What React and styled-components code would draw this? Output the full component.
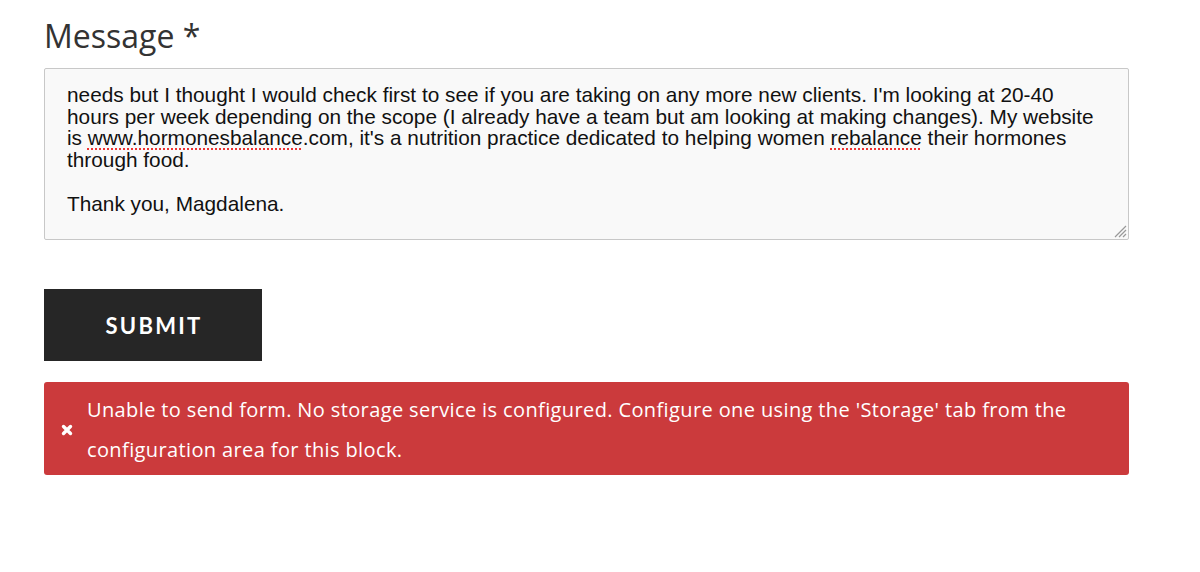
import React from 'react';
import styled, { createGlobalStyle } from 'styled-components';

const GlobalStyle = createGlobalStyle`
  html, body { margin: 0; padding: 0; background: #fff; }
  body { font-family: "Open Sans", Lato, sans-serif; }
`;

const Form = styled.div`
  padding: 14px 71px 0 44px;
  display: flex;
  flex-direction: column;
`;

const Label = styled.label`
  font-family: "Open Sans", Lato, sans-serif;
  font-size: 32px;
  font-weight: 400;
  color: #333;
  line-height: 44px;
  margin-bottom: 10px;
`;

const TextBox = styled.div`
  position: relative;
  height: 172px;
  overflow: hidden;
  background: #f9f9f9;
  border: 1px solid #c8c8c8;
  border-radius: 2px;
  padding: 15px 22px 0 22px;
  box-sizing: border-box;
  font-family: "Liberation Sans", Arial, sans-serif;
  font-size: 20.8px;
  line-height: 21.7px;
  color: #111;
  white-space: nowrap;
`;

const Spell = styled.span`
  text-decoration: underline dotted #e33;
  text-decoration-thickness: 2px;
  text-underline-offset: 3px;
`;

const Grip = styled.svg`
  position: absolute;
  right: 1px;
  bottom: 1px;
`;

const Submit = styled.button`
  align-self: flex-start;
  margin-top: 49px;
  width: 218px;
  height: 72px;
  border: none;
  background: #262626;
  color: #fff;
  font-family: Lato, "Open Sans", sans-serif;
  font-weight: 700;
  font-size: 22px;
  letter-spacing: 2.3px;
  padding: 0 0 0 2px;
  cursor: pointer;
`;

const Alert = styled.div`
  margin-top: 21px;
  background: #cb3a3c;
  border-radius: 3px;
  display: flex;
  align-items: center;
  padding: 8px 40px 5px 17px;
  color: #fff;
`;

const Icon = styled.svg`
  flex: none;
  margin-right: 14px;
`;

const AlertText = styled.p`
  margin: 0;
  font-family: "Open Sans", Lato, sans-serif;
  font-size: 20px;
  letter-spacing: 0.38px;
  line-height: 40px;
`;

export default function App() {
  return (
    <>
      <GlobalStyle />
      <Form>
        <Label>Message *</Label>
        <TextBox>
          needs but I thought I would check first to see if you are taking on any more new clients. I'm looking at 20-40<br />
          hours per week depending on the scope (I already have a team but am looking at making changes). My website<br />
          is <Spell>www.hormonesbalance</Spell>.com, it's a nutrition practice dedicated to helping women <Spell>rebalance</Spell> their hormones<br />
          through food.<br />
          <br />
          Thank you, Magdalena.
          <Grip width="16" height="16" viewBox="0 0 16 16">
            <path d="M15 4 L4 15 M15 8 L8 15 M15 12 L12 15" stroke="#999" strokeWidth="1.2" />
          </Grip>
        </TextBox>
        <Submit>SUBMIT</Submit>
        <Alert>
          <Icon width="12" height="12" viewBox="0 0 12 12">
            <path d="M2.5 2.5 L9.5 9.5 M9.5 2.5 L2.5 9.5" stroke="#fff" strokeWidth="3.4" strokeLinecap="round" />
          </Icon>
          <AlertText>
            Unable to send form. No storage service is configured. Configure one using the 'Storage' tab from the configuration area for this block.
          </AlertText>
        </Alert>
      </Form>
    </>
  );
}
